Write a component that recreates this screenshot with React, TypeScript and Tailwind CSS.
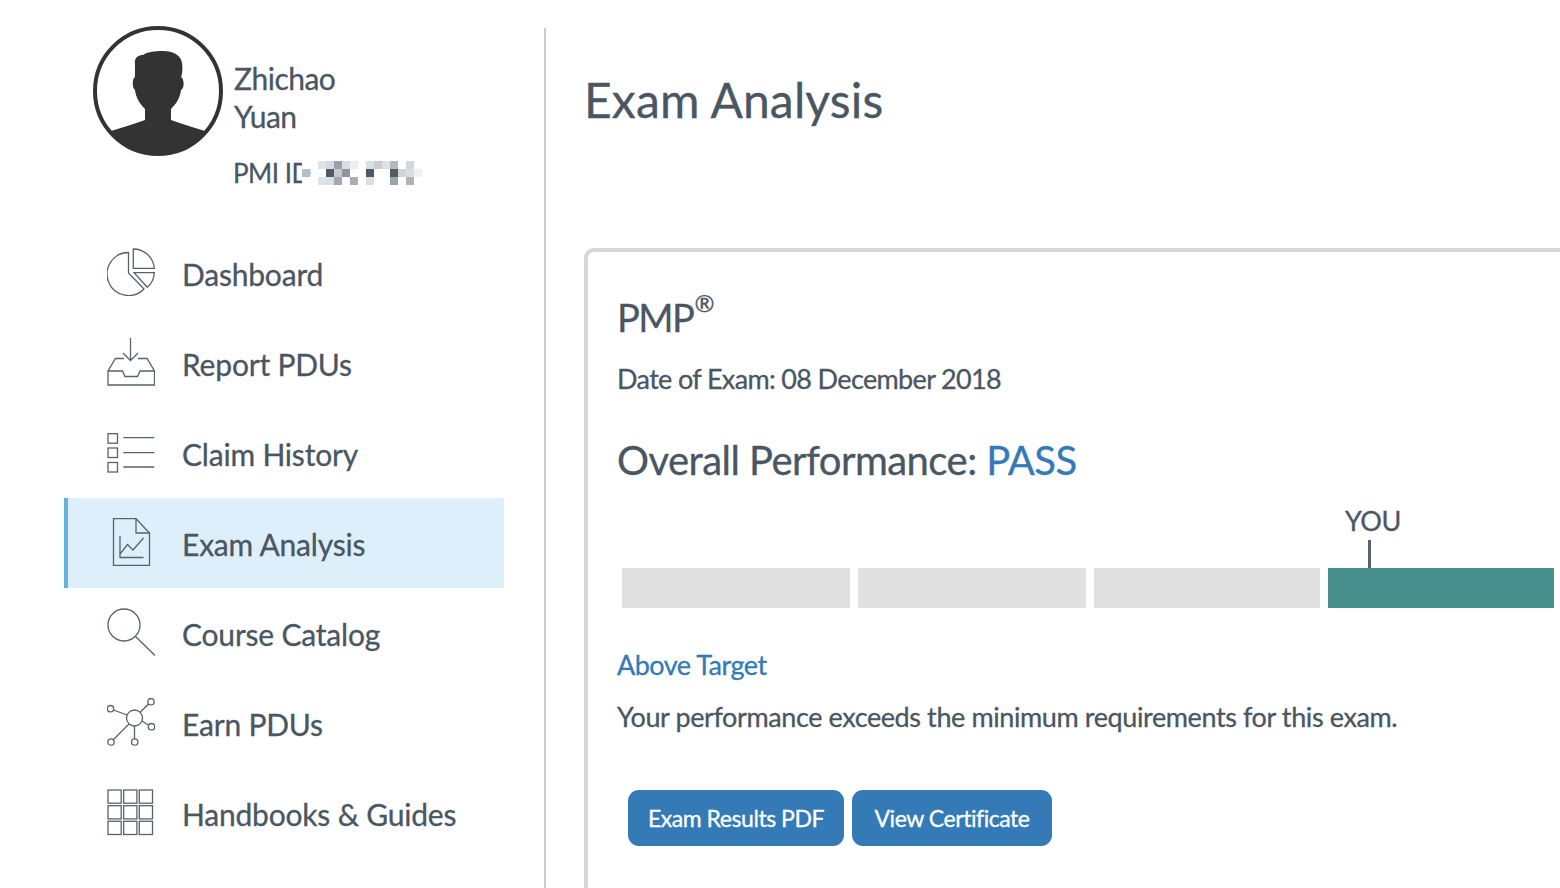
import type { ReactNode } from "react"

const iconProps = {
  width: 48,
  height: 48,
  viewBox: "0 0 48 48",
  fill: "none",
  stroke: "#56636e",
  strokeWidth: 1.3,
}

function DashboardIcon() {
  return (
    <svg {...iconProps}>
      <path d="M21.500 4.500A21.500 21.500 0 1 0 37 41L21.500 25Z" />
      <path d="M26.300 1A21 21 0 0 1 47.300 20.300H26.300Z" />
      <path d="M27 24.700H47.300A21 21 0 0 1 40.300 39.300Z" />
    </svg>
  )
}

function InboxIcon() {
  return (
    <svg {...iconProps}>
      <path d="M23.500 0V22M16 15L23.500 22.500L31 15" />
      <path d="M17 20.500H8.500L1 33V47H47.500V33L40 20.500H31" />
      <path d="M1 33H15.500L18 38.500H30.500L33 33H47.500" />
    </svg>
  )
}

function ListIcon() {
  return (
    <svg {...iconProps}>
      <rect x="1" y="5.700" width="9.500" height="9.500" />
      <rect x="1" y="20" width="9.500" height="9.500" />
      <rect x="1" y="34.500" width="9.500" height="9.500" />
      <path d="M16.300 9.700H47.300M16.300 24.700H47.300M16.300 39H47.300" />
    </svg>
  )
}

function ExamIcon() {
  return (
    <svg {...iconProps}>
      <path d="M6.500 0.700H29L42.500 15V47.300H6.500Z" />
      <path d="M29 0.700V15H42.500" />
      <path d="M13 18V39.500H36.500" />
      <path d="M13 36L20.500 26.500L26 32L36.500 20" />
    </svg>
  )
}

function SearchIcon() {
  return (
    <svg {...iconProps}>
      <circle cx="17" cy="17" r="16" />
      <path d="M28.500 28.500L48 47.500" />
    </svg>
  )
}

function NetworkIcon() {
  return (
    <svg {...iconProps}>
      <circle cx="27.500" cy="20" r="8" />
      <circle cx="44" cy="3.700" r="3.200" />
      <circle cx="3.500" cy="10.700" r="3.200" />
      <circle cx="44.500" cy="28.700" r="3.200" />
      <circle cx="27.700" cy="44" r="3.200" />
      <circle cx="4" cy="44" r="3.200" />
      <path d="M33 14.500L41.500 6M6.500 12L20 17M35 23L41.500 27M27.500 28V41M22 26L6.500 41.500" />
    </svg>
  )
}

function GridIcon() {
  const cells = [1, 16.700, 32.300]
  return (
    <svg {...iconProps}>
      {cells.map((y) =>
        cells.map((x) => <rect key={`${x}-${y}`} x={x} y={y + 1} width="13.200" height="13.200" />),
      )}
    </svg>
  )
}

function Avatar() {
  return (
    <svg width="130" height="130" viewBox="0 0 130 130" className="shrink-0">
      <defs>
        <clipPath id="avatar-clip">
          <circle cx="65" cy="65" r="63" />
        </clipPath>
      </defs>
      <g clipPath="url(#avatar-clip)" fill="#333333">
        <path d="M42 38C41 32 45 29 50 29C54 26 61 25 70 25C80 25 88 29 89 37C90 44 89 49 88 51C91 52 92 62 88 64C87 72 83 78 78 83V94C88 98 100 101 112 105V130H18V105C30 101 42 98 52 94V83C47 78 43 72 42 64C39 62 39 52 42 51Z" />
      </g>
      <circle cx="65" cy="65" r="63" fill="none" stroke="#333333" strokeWidth="4" />
    </svg>
  )
}

// mosaic hiding the ID number, 8px cells
const mosaic = [
  ["#ffffff", "", "#dfe2e5", "#d5d8dc", "#9aa2a9", "#d9dce0", "#eceef0", "", "#dcdfe2", "#c9cdd1", "#dfe2e5", "#b4b9bf", "", "#d3d6da", ""],
  ["#b9bec3", "", "", "#4e5a66", "#c5c9cd", "#8d959d", "", "", "#4c5864", "", "", "#4f5b67", "#d0d3d7", "#dcdfe2", "#eef0f1"],
  ["#ffffff", "", "#e0e3e5", "#dde0e2", "#a2a9af", "", "#a8aeb4", "", "#dcdfe2", "", "", "#9aa2a9", "", "#adb3b9", ""],
]

const navItems: { name: string; icon: ReactNode; active?: boolean }[] = [
  { name: "Dashboard", icon: <DashboardIcon /> },
  { name: "Report PDUs", icon: <InboxIcon /> },
  { name: "Claim History", icon: <ListIcon /> },
  { name: "Exam Analysis", icon: <ExamIcon />, active: true },
  { name: "Course Catalog", icon: <SearchIcon /> },
  { name: "Earn PDUs", icon: <NetworkIcon /> },
  { name: "Handbooks & Guides", icon: <GridIcon /> },
]

function Sidebar() {
  return (
    <aside className="mt-7 flex w-[546px] shrink-0 flex-col border-r-2 border-[#c9ccce] pl-16">
      {/* Profile */}
      <div className="-mt-[2px] ml-[29px] flex h-[202px] items-start gap-[11px]">
        <Avatar />
        <div className="pt-[33px] text-[30px] leading-[38px] tracking-[-0.5px]">
          <div>Zhichao</div>
          <div>Yuan</div>
          <div className="relative mt-[26px] flex h-[24px] items-center text-[26px] tracking-[-0.5px]">
            <span className="-ml-px whitespace-nowrap">PMI ID</span>
            <div className="absolute left-[68px] top-0 grid grid-cols-[repeat(15,8px)] grid-rows-[repeat(3,8px)]">
              {mosaic.flat().map((color, i) => (
                <div key={i} style={{ backgroundColor: color || "transparent" }} />
              ))}
            </div>
          </div>
        </div>
      </div>

      {/* Navigation */}
      <nav className="flex w-[440px] flex-col">
        {navItems.map((item) => (
          <div
            key={item.name}
            className={
              item.active
                ? "flex h-[90px] items-center gap-[27px] border-l-4 border-[#62b4de] bg-[#ddeffa] pl-[39px]"
                : "flex h-[90px] items-center gap-[27px] pl-[43px]"
            }
          >
            <span className="-mt-[2px] flex h-12 w-12 shrink-0 items-center justify-center">{item.icon}</span>
            <span className="whitespace-nowrap pt-[2px] text-[30px] tracking-[-0.2px]">{item.name}</span>
          </div>
        ))}
      </nav>
    </aside>
  )
}

function Card() {
  return (
    <section className="w-[1100px] flex-1 rounded-tl-[10px] border-l-4 border-t-4 border-[#d6d6d6] pl-[29px] pt-[37px]">
      <h2 className="flex h-[60px] items-start text-[38px] leading-[56px] tracking-[-1.5px]">
        PMP<sup className="static ml-[1px] mt-[2px] text-[24px] leading-[24px]">®</sup>
      </h2>
      <p className="mt-[12px] text-[27px] leading-[36px] tracking-[-0.65px]">Date of Exam: 08 December 2018</p>
      <h3 className="mt-[37px] text-[40px] leading-[52px] tracking-[-0.55px]">
        Overall Performance: <span className="text-[#337ab7]">PASS</span>
      </h3>

      {/* Score bar */}
      <div className="ml-[5px] mt-[82px] flex gap-2">
        <div className="h-10 w-[228px] bg-[#e0e0e0]" />
        <div className="h-10 w-[228px] bg-[#e0e0e0]" />
        <div className="h-10 w-[226px] bg-[#e0e0e0]" />
        <div className="relative h-10 w-[226px] bg-[#468e8b]">
          <div className="absolute -top-7 left-[40px] h-7 w-[3px] bg-[#56636e]" />
          <div className="absolute -top-[65px] left-[17px] text-[27px] leading-[36px] tracking-[-0.5px]">YOU</div>
        </div>
      </div>

      <p className="mt-[37px] text-[27px] leading-[40px] tracking-[-0.5px] text-[#337ab7]">Above Target</p>
      <p className="mt-[12px] whitespace-nowrap text-[27px] leading-[40px] tracking-[-0.4px]">
        Your performance exceeds the minimum requirements for this exam.
      </p>

      <div className="ml-[11px] mt-[53px] flex gap-2">
        <button className="h-14 w-[216px] rounded-[11px] bg-[#337ab7] text-[23px] tracking-[-0.45px] text-white">
          Exam Results PDF
        </button>
        <button className="h-14 w-[200px] rounded-[11px] bg-[#337ab7] text-[23px] tracking-[-0.45px] text-white">
          View Certificate
        </button>
      </div>
    </section>
  )
}

export default function App() {
  return (
    <div className="flex h-[888px] w-[1560px] overflow-hidden bg-white font-['Lato',sans-serif] text-[#4a5662] [-webkit-text-stroke:0.3px]">
      <Sidebar />
      <main className="flex flex-1 flex-col pl-[38px]">
        <h1 className="mt-[65px] h-[183px] shrink-0 text-[48px] leading-[70px] tracking-[0.15px]">Exam Analysis</h1>
        <Card />
      </main>
    </div>
  )
}
